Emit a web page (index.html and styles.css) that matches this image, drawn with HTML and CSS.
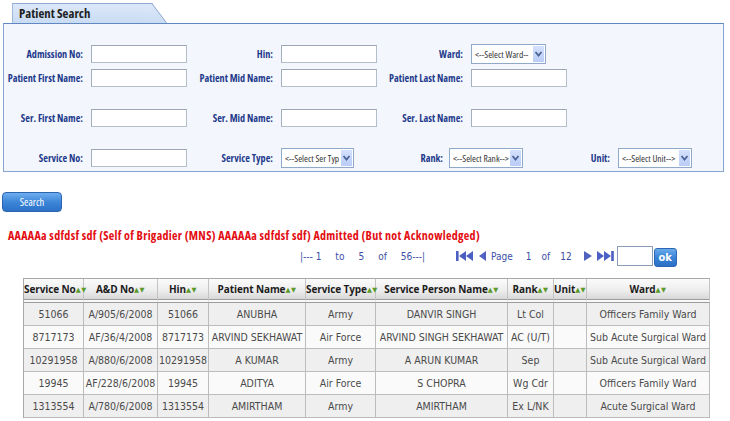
FILE: index.html
```html
<!DOCTYPE html>
<html>
<head>
<meta charset="utf-8">
<title>Patient Search</title>
<link rel="stylesheet" href="styles.css">
</head>
<body>
<div class="search-box">
  <div class="tab">Patient Search</div>
  <div class="panel">
    <div class="frow">
      <label class="lbl">Admission No:</label><span class="cell"><input class="txt" type="text"></span>
      <label class="lbl">Hin:</label><span class="cell"><input class="txt" type="text"></span>
      <label class="lbl">Ward:</label><span class="cell"><span class="sel w75"><span class="sel-text">&lt;--Select Ward--</span><span class="sel-btn"><svg width="11" height="16" viewBox="0 0 11 16"><path d="M2.5 6 L5.5 9.5 L8.5 6" fill="none" stroke="#4a6396" stroke-width="1.8"/></svg></span></span></span>
    </div>
    <div class="frow">
      <label class="lbl">Patient First Name:</label><span class="cell"><input class="txt" type="text"></span>
      <label class="lbl">Patient Mid Name:</label><span class="cell"><input class="txt" type="text"></span>
      <label class="lbl">Patient Last Name:</label><span class="cell"><input class="txt" type="text"></span>
    </div>
    <div class="frow spaced">
      <label class="lbl">Ser. First Name:</label><span class="cell"><input class="txt" type="text"></span>
      <label class="lbl">Ser. Mid Name:</label><span class="cell"><input class="txt" type="text"></span>
      <label class="lbl">Ser. Last Name:</label><span class="cell"><input class="txt" type="text"></span>
    </div>
    <div class="frow r4 spaced">
      <label class="lbl">Service No:</label><span class="cell"><input class="txt" type="text"></span>
      <label class="lbl">Service Type:</label><span class="cell"><span class="sel w73"><span class="sel-text">&lt;--Select Ser Typ</span><span class="sel-btn"><svg width="11" height="16" viewBox="0 0 11 16"><path d="M2.5 6 L5.5 9.5 L8.5 6" fill="none" stroke="#4a6396" stroke-width="1.8"/></svg></span></span></span>
      <label class="lbl lbl-rank">Rank:</label><span class="cell"><span class="sel w74"><span class="sel-text">&lt;--Select Rank--&gt;</span><span class="sel-btn"><svg width="11" height="16" viewBox="0 0 11 16"><path d="M2.5 6 L5.5 9.5 L8.5 6" fill="none" stroke="#4a6396" stroke-width="1.8"/></svg></span></span></span>
      <label class="lbl">Unit:</label><span class="cell"><span class="sel w74"><span class="sel-text">&lt;--Select Unit--&gt;</span><span class="sel-btn"><svg width="11" height="16" viewBox="0 0 11 16"><path d="M2.5 6 L5.5 9.5 L8.5 6" fill="none" stroke="#4a6396" stroke-width="1.8"/></svg></span></span></span>
    </div>
  </div>
</div>

<button class="btn-search" type="button">Search</button>

<p class="alert">AAAAAa sdfdsf sdf (Self of Brigadier (MNS) AAAAAa sdfdsf sdf) Admitted (But not Acknowledged)</p>

<div class="pager">
  <div class="range">
    <span>|--- 1</span><span>to</span><span>5</span><span>of</span><span>56---|</span>
  </div>
  <div class="nav">
    <svg class="ic ic-first" width="18" height="12" viewBox="0 0 18 12"><rect x="0" y="1" width="2.6" height="10" fill="#4c5fc3"/><polygon points="10,1 3,6 10,11" fill="#4c5fc3"/><polygon points="17,1 10,6 17,11" fill="#4c5fc3"/></svg>
    <svg class="ic ic-prev" width="7" height="10" viewBox="0 0 7 10"><polygon points="7,0 0,5 7,10" fill="#5163c2"/></svg>
    <span class="pg-word">Page</span>
    <span class="pg-num">1</span>
    <span class="pg-of">of</span>
    <span class="pg-total">12</span>
    <svg class="ic ic-next" width="8" height="10" viewBox="0 0 8 10"><polygon points="0,0 8,5 0,10" fill="#5163c2"/></svg>
    <svg class="ic ic-last" width="17" height="12" viewBox="0 0 17 12"><polygon points="0,1 7,6 0,11" fill="#4c5fc3"/><polygon points="7,1 14,6 7,11" fill="#4c5fc3"/><rect x="14.2" y="1" width="2.6" height="10" fill="#4c5fc3"/></svg>
    <input class="pg-input" type="text">
    <button class="btn-ok" type="button">ok</button>
  </div>
</div>

<table class="results">
  <colgroup>
    <col style="width:60px"><col style="width:74px"><col style="width:51px"><col style="width:97px"><col style="width:70px"><col style="width:132px"><col style="width:46px"><col style="width:33px"><col style="width:123px">
  </colgroup>
  <thead>
    <tr>
      <th>Service No<span class="sort">▲▼</span></th>
      <th>A&amp;D No<span class="sort">▲▼</span></th>
      <th>Hin<span class="sort">▲▼</span></th>
      <th>Patient Name<span class="sort">▲▼</span></th>
      <th>Service Type<span class="sort">▲▼</span></th>
      <th>Service Person Name<span class="sort">▲▼</span></th>
      <th>Rank<span class="sort">▲▼</span></th>
      <th>Unit<span class="sort">▲▼</span></th>
      <th>Ward<span class="sort">▲▼</span></th>
    </tr>
  </thead>
  <tbody>
    <tr class="odd"><td>51066</td><td>A/905/6/2008</td><td>51066</td><td>ANUBHA</td><td>Army</td><td>DANVIR SINGH</td><td>Lt Col</td><td></td><td>Officers Family Ward</td></tr>
    <tr class="even"><td>8717173</td><td>AF/36/4/2008</td><td>8717173</td><td>ARVIND SEKHAWAT</td><td>Air Force</td><td>ARVIND SINGH SEKHAWAT</td><td>AC (U/T)</td><td></td><td>Sub Acute Surgical Ward</td></tr>
    <tr class="odd"><td>10291958</td><td>A/880/6/2008</td><td>10291958</td><td>A KUMAR</td><td>Army</td><td>A ARUN KUMAR</td><td>Sep</td><td></td><td>Sub Acute Surgical Ward</td></tr>
    <tr class="even"><td>19945</td><td>AF/228/6/2008</td><td>19945</td><td>ADITYA</td><td>Air Force</td><td>S CHOPRA</td><td>Wg Cdr</td><td></td><td>Officers Family Ward</td></tr>
    <tr class="odd"><td>1313554</td><td>A/780/6/2008</td><td>1313554</td><td>AMIRTHAM</td><td>Army</td><td>AMIRTHAM</td><td>Ex L/NK</td><td></td><td>Acute Surgical Ward</td></tr>
  </tbody>
</table>
</body>
</html>
```

FILE: styles.css
```css
* { box-sizing: border-box; }

body {
  margin: 0;
  background: #ffffff;
  color: #333;
  font-family: "Open Sans", "DejaVu Sans Condensed", sans-serif;
}

/* ---------- search panel ---------- */
.search-box {
  margin: 3px 6px 0 3px;
}

.tab {
  position: relative;
  width: 140px;
  height: 20px;
  margin-left: 9px;
  padding-left: 6px;
  border-top: 1px solid #8eabd4;
  border-left: 1px solid #9fb8dc;
  background: linear-gradient(#dce8f8, #c9dcf4);
  font-family: "Open Sans", sans-serif;
  font-stretch: 75%;
  font-weight: bold;
  font-size: 12.8px;
  line-height: 19px;
  color: #1e1e1e;
}

.tab::after {
  content: "";
  position: absolute;
  top: -1px;
  right: 0;
  width: 22px;
  height: 20px;
  border-top: 1px solid #8eabd4;
  border-right: 1px solid #7f9fcc;
  background: linear-gradient(#dce8f8, #c9dcf4);
  transform: skewX(37deg);
  transform-origin: top right;
}

.panel {
  position: relative;
  z-index: 1;
  border: 1px solid #86a4cf;
  border-top-color: #5f88c2;
  background: #f3f7fd;
  padding: 18px 0 1px 0;
}

.frow {
  display: grid;
  grid-template-columns: 87px 96px 94px 96px 94px 96px;
  height: 24px;
  align-items: center;
}

.frow.spaced { margin-top: 16px; }

.frow.r4 {
  grid-template-columns: 87px 96px 94px 73px 95px 74px 95px 74px;
}

.lbl {
  text-align: right;
  padding-right: 8px;
  font-family: "Open Sans", sans-serif;
  font-stretch: 75%;
  font-weight: bold;
  font-size: 10.2px;
  color: #1f3a8c;
  white-space: nowrap;
}

.lbl-rank { padding-right: 6px; }

.cell {
  display: flex;
  align-items: center;
}

.txt {
  width: 96px;
  height: 18px;
  margin: 0;
  padding: 0 2px;
  border: 1px solid #b4bec9;
  border-top-color: #9aa6b4;
  border-left-color: #a4afbc;
  background: #fff;
  outline: none;
}

.sel {
  display: flex;
  align-items: center;
  height: 20px;
  padding: 1px;
  border: 1px solid #8fa9c8;
  background: #fff;
  overflow: hidden;
}
.w75 { width: 75px; }
.w74 { width: 74px; }
.w73 { width: 73px; }

.sel-text {
  flex: 1;
  overflow: hidden;
  white-space: nowrap;
  padding-left: 2px;
  font-family: "Open Sans", sans-serif;
  font-stretch: 75%;
  font-size: 9.5px;
  color: #333;
}

.sel-btn {
  flex: none;
  display: flex;
  width: 11px;
  height: 16px;
  background: linear-gradient(#d4e0fc, #b9cdf8);
}

/* ---------- search button ---------- */
.btn-search {
  display: block;
  width: 60px;
  height: 20px;
  margin: 20px 0 0 2px;
  padding: 0;
  border: 1px solid #2d64b0;
  border-radius: 4px;
  background: linear-gradient(#6eaeee, #3d86d8 50%, #2c72c8);
  color: #fff;
  font-family: "Open Sans", sans-serif;
  font-stretch: 75%;
  font-size: 10.5px;
  line-height: 18px;
}

/* ---------- alert ---------- */
.alert {
  margin: 17px 0 0 8px;
  font-family: "Open Sans", sans-serif;
  font-stretch: 75%;
  font-weight: bold;
  font-size: 12px;
  letter-spacing: 0.3px;
  line-height: 14px;
  color: #e30d12;
  white-space: nowrap;
}

/* ---------- pager ---------- */
.pager {
  display: flex;
  align-items: center;
  height: 22px;
  margin-top: 2px;
  font-family: "DejaVu Sans Condensed", sans-serif;
  font-size: 10px;
  color: #3d4fa6;
}

.range {
  display: flex;
  gap: 14px;
  margin-left: 300px;
}

.nav {
  display: flex;
  align-items: center;
  margin-left: 31px;
}

.ic-prev { margin-left: 5px; }
.pg-word { margin-left: 5px; }
.pg-num { margin-left: 13px; }
.pg-of { margin-left: 10px; }
.pg-total { margin-left: 10px; }
.ic-next { margin-left: 12px; }
.ic-last { margin-left: 5px; }

.pg-input {
  width: 36px;
  height: 20px;
  margin: 0 0 0 3px;
  padding: 0;
  border: 1px solid #8b9db6;
  background: #fff;
}

.btn-ok {
  width: 23px;
  height: 19px;
  margin: 2px 0 0 1px;
  padding: 0;
  border: 1px solid #2d66b4;
  border-radius: 3px;
  background: linear-gradient(#6aaaeb, #3a84d6 50%, #2b70c6);
  color: #fff;
  font-family: "DejaVu Sans Condensed", sans-serif;
  font-weight: bold;
  font-size: 11px;
}

/* ---------- results table ---------- */
.results {
  margin: 11px 0 0 23px;
  width: 686px;
  table-layout: fixed;
  border-collapse: separate;
  border-spacing: 0;
  border-top: 1px solid #a8a8a8;
  border-left: 1px solid #a8a8a8;
}

.results thead tr { height: 24px; }

.results th {
  padding: 0;
  border-right: 1px solid #c4c4c4;
  border-bottom: 4px double #9c9c9c;
  background: linear-gradient(#fbfbfb, #eeeeee 55%, #d8d8d8);
  font-family: "Open Sans", sans-serif;
  font-weight: bold;
  font-size: 10px;
  letter-spacing: -0.1px;
  color: #1c1c1c;
  white-space: nowrap;
  text-align: center;
}

.sort {
  font-family: "DejaVu Sans", sans-serif;
  font-size: 6.5px;
  color: #5c9a2c;
  letter-spacing: 0.5px;
  vertical-align: 1px;
}

.results tbody tr { height: 23px; }

.results td {
  padding: 0;
  border-right: 1px solid #bcbcbc;
  border-bottom: 1px solid #bcbcbc;
  font-family: "DejaVu Sans Condensed", sans-serif;
  font-size: 10.5px;
  color: #4a4a4a;
  text-align: center;
  white-space: nowrap;
}

.results tr.odd td { background: #efefef; }
.results tr.even td { background: #fafafa; }
```
